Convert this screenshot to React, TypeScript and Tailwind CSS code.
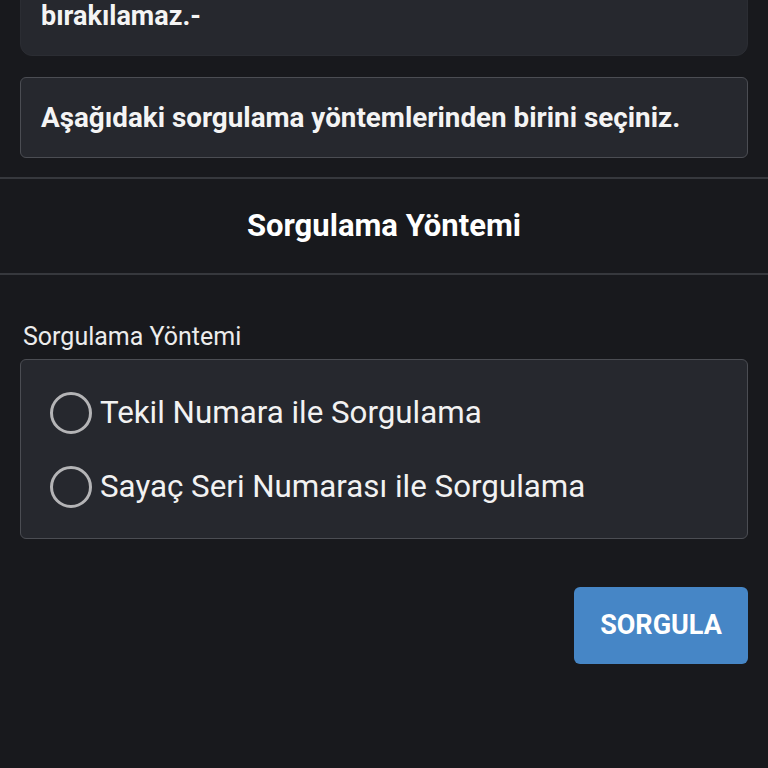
import React from "react";

function Radio({ label }: { label: string }) {
  return (
    <label className="flex h-[74px] items-center gap-[8px] cursor-pointer">
      <span className="block h-[42px] w-[42px] shrink-0 rounded-full border-[3px] border-[#b4b4b6]" />
      <span className="text-[31.3px] leading-none text-[#f2f2f2]">{label}</span>
    </label>
  );
}

export default function App() {
  return (
    <div className="min-h-screen overflow-hidden bg-[#18191d] text-white font-['Roboto','Liberation_Sans',sans-serif]">
      <div className="px-5">
        <div className="-mt-[42px] rounded-[12px] border border-[#2b2d33] bg-[#26282e] px-5 pt-[41px] pb-[23px]">
          <p className="text-[27px] font-bold leading-[32px] text-[#f4f4f4]">bırakılamaz.-</p>
        </div>
        <div className="mt-[21px] flex h-[81px] items-center rounded-[6px] border border-[#4b4d53] bg-[#26282e] px-5">
          <p className="text-[27.8px] font-bold leading-[32px] text-[#f4f4f4]">
            Aşağıdaki sorgulama yöntemlerinden birini seçiniz.
          </p>
        </div>
      </div>
      <div className="mt-[19px] border-t-2 border-[#36383d]" />
      <div className="flex h-[94px] items-center justify-center">
        <h2 className="text-[31px] font-bold text-white">Sorgulama Yöntemi</h2>
      </div>
      <div className="border-t-2 border-[#36383d]" />
      <div className="px-5">
        <p className="mt-[47px] pl-[3px] text-[25px] leading-[29px] text-[#ececec]">Sorgulama Yöntemi</p>
        <div className="mt-[8px] rounded-[6px] border border-[#4b4d53] bg-[#26282e] pl-[29px] pt-[16px] pb-[14px]">
          <Radio label="Tekil Numara ile Sorgulama" />
          <Radio label="Sayaç Seri Numarası ile Sorgulama" />
        </div>
        <div className="mt-[48px] flex justify-end">
          <button className="h-[77px] w-[174px] rounded-[6px] bg-[#4686c6] text-[27px] font-bold text-white">
            SORGULA
          </button>
        </div>
      </div>
    </div>
  );
}
